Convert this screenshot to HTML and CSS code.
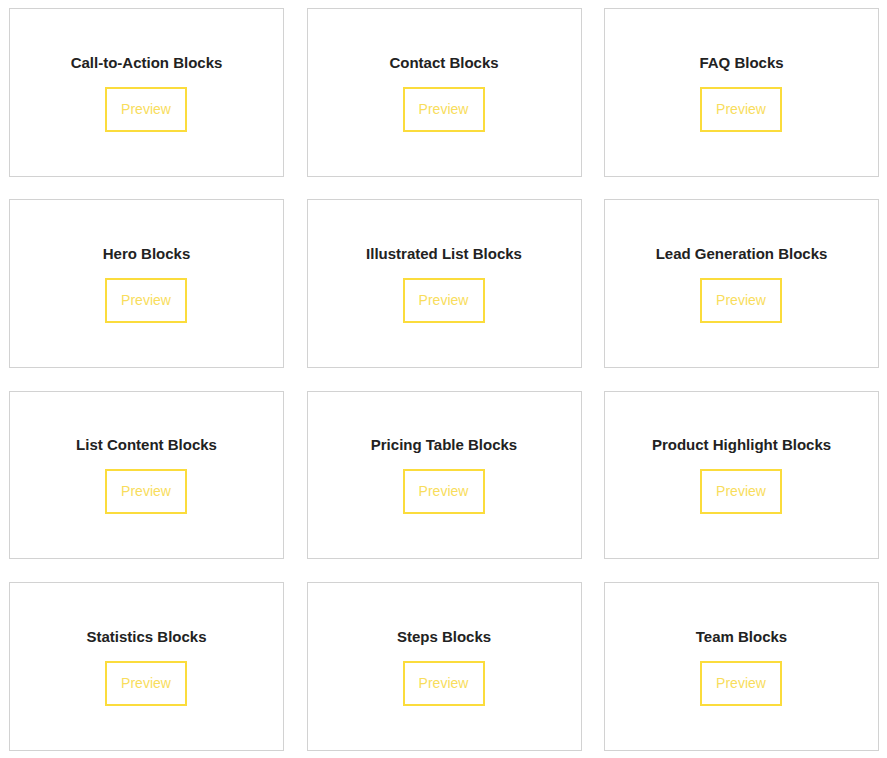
FILE: index.html
```html
<!DOCTYPE html>
<html lang="en">
<head>
<meta charset="UTF-8">
<meta name="viewport" content="width=device-width, initial-scale=1.0">
<link rel="stylesheet" href="styles.css">
</head>
<body>
  <div class="blocks-grid">
    <div class="block-card"><div class="block-title">Call-to-Action Blocks</div><a class="preview-btn" href="#">Preview</a></div>
    <div class="block-card"><div class="block-title">Contact Blocks</div><a class="preview-btn" href="#">Preview</a></div>
    <div class="block-card"><div class="block-title">FAQ Blocks</div><a class="preview-btn" href="#">Preview</a></div>
    <div class="block-card"><div class="block-title">Hero Blocks</div><a class="preview-btn" href="#">Preview</a></div>
    <div class="block-card"><div class="block-title">Illustrated List Blocks</div><a class="preview-btn" href="#">Preview</a></div>
    <div class="block-card"><div class="block-title">Lead Generation Blocks</div><a class="preview-btn" href="#">Preview</a></div>
    <div class="block-card"><div class="block-title">List Content Blocks</div><a class="preview-btn" href="#">Preview</a></div>
    <div class="block-card"><div class="block-title">Pricing Table Blocks</div><a class="preview-btn" href="#">Preview</a></div>
    <div class="block-card"><div class="block-title">Product Highlight Blocks</div><a class="preview-btn" href="#">Preview</a></div>
    <div class="block-card"><div class="block-title">Statistics Blocks</div><a class="preview-btn" href="#">Preview</a></div>
    <div class="block-card"><div class="block-title">Steps Blocks</div><a class="preview-btn" href="#">Preview</a></div>
    <div class="block-card"><div class="block-title">Team Blocks</div><a class="preview-btn" href="#">Preview</a></div>
  </div>
</body>
</html>
```

FILE: styles.css
```css
body {
  margin: 0;
  padding: 8px 8px 0 9px;
  background-color: #fff;
  font-family: "Liberation Sans", Arial, sans-serif;
}

.blocks-grid {
  display: grid;
  grid-template-columns: repeat(3, 1fr);
  grid-auto-rows: 168.8px;
  column-gap: 22.5px;
  row-gap: 22.5px;
  width: 870px;
}

.block-card {
  display: flex;
  flex-direction: column;
  align-items: center;
  justify-content: center;
  border: 1px solid #d2d2d2;
  box-sizing: border-box;
}

.block-title {
  font-size: 15px;
  line-height: 20px;
  font-weight: bold;
  color: #222;
  margin-bottom: 14px;
}

.preview-btn {
  display: flex;
  align-items: center;
  justify-content: center;
  width: 82px;
  height: 45px;
  margin-right: 1px;
  padding-bottom: 1px;
  box-sizing: border-box;
  border: 2px solid #fbdc3c;
  color: #f8dd5c;
  font-size: 14px;
  text-decoration: none;
}
```
